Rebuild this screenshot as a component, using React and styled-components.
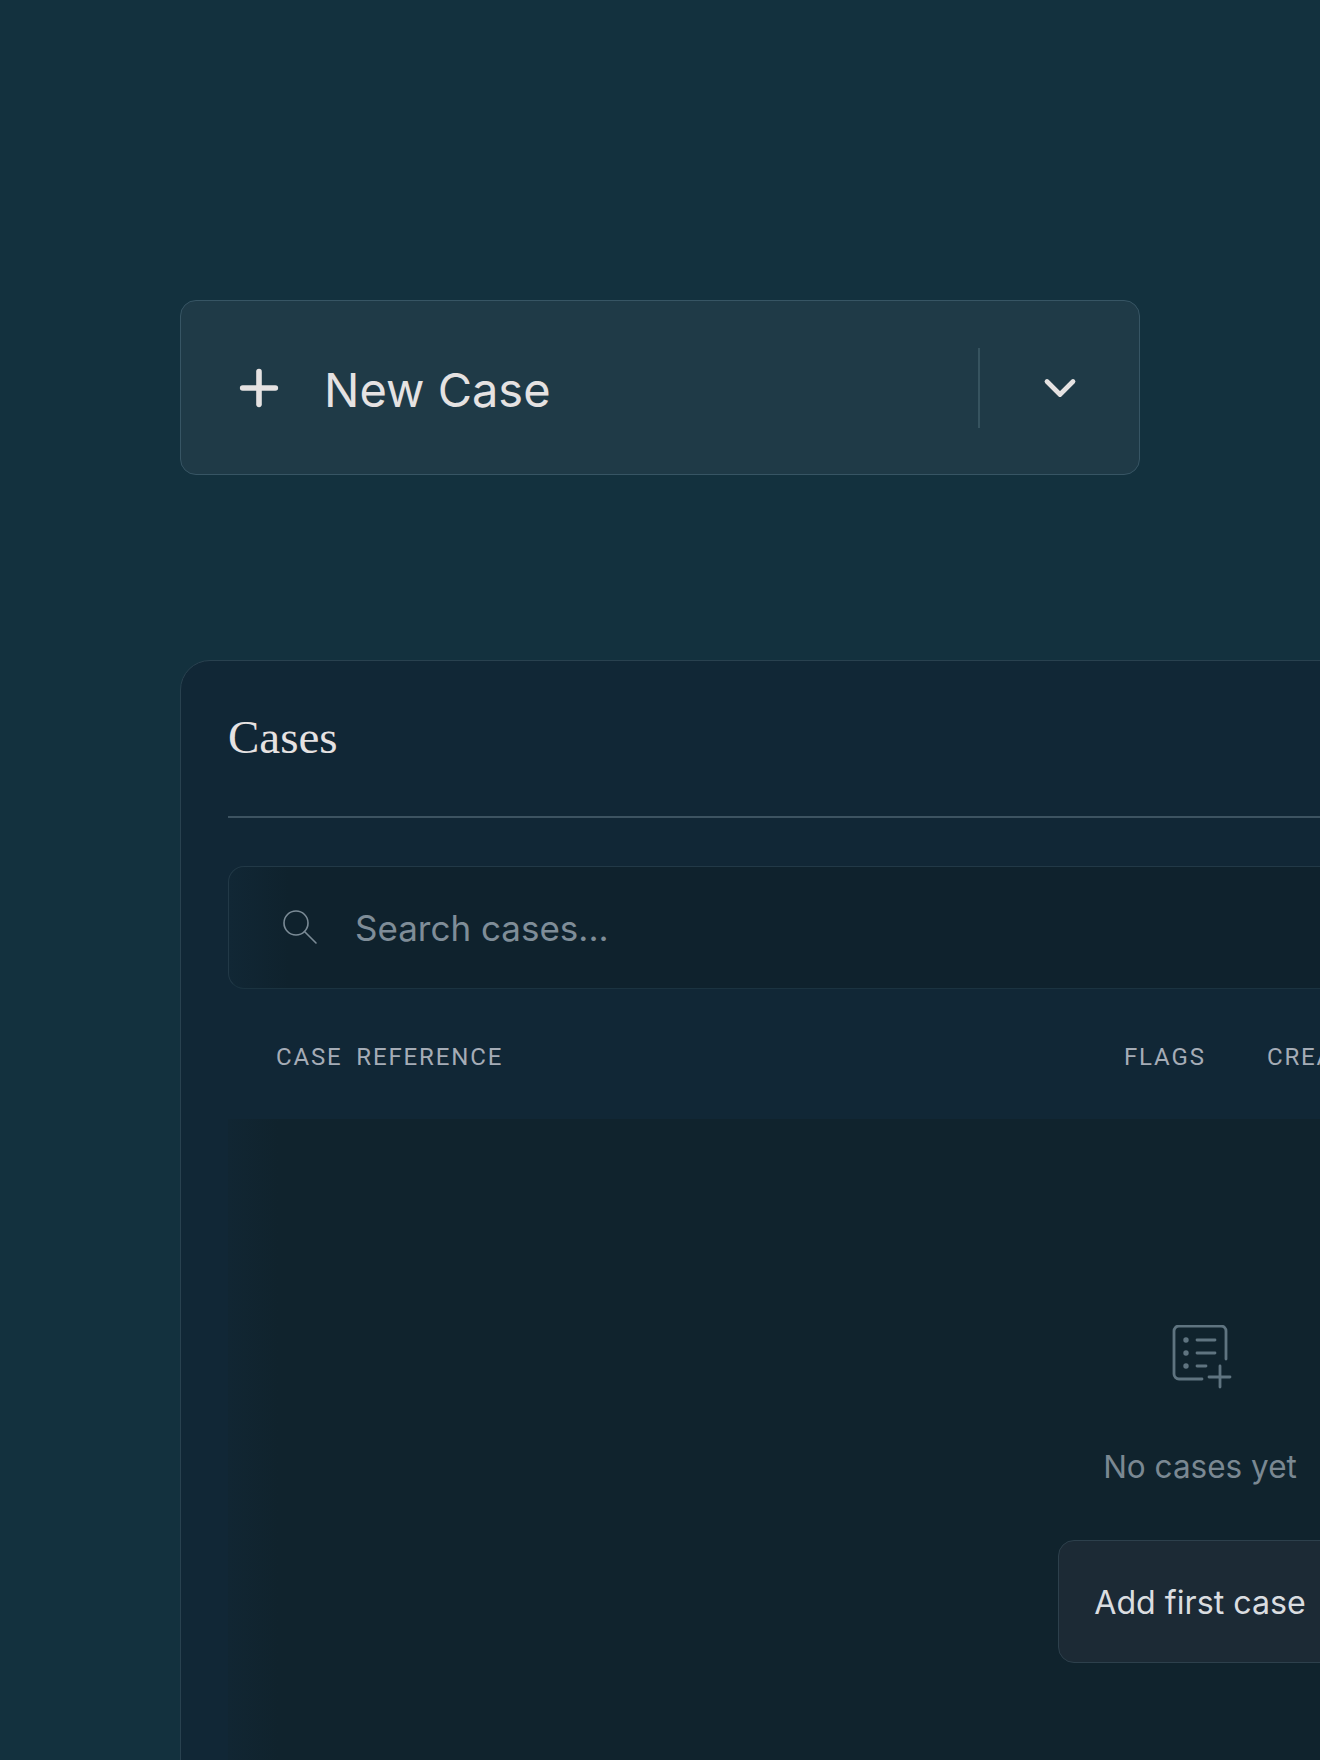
import React from 'react';
import styled, { createGlobalStyle } from 'styled-components';
import { ChevronDown, Plus } from 'lucide-react';

const GlobalStyle = createGlobalStyle`
  html, body {
    margin: 0;
    height: 1760px;
    overflow: hidden;
    background: #13313e;
  }
`;

const Page = styled.div`
  width: 2400px;
  height: 1760px;
  box-sizing: border-box;
  padding: 300px 180px 0;
  font-family: Inter, "Noto Sans", sans-serif;
  background: #13313e;
`;

const NewCaseButton = styled.button`
  display: flex;
  align-items: center;
  width: 960px;
  height: 175px;
  box-sizing: border-box;
  padding: 0 0 0 50px;
  background: #1f3a47;
  border: 1.5px solid #375564;
  border-radius: 16px;
  color: #e5e2e2;
  font-family: inherit;
  cursor: pointer;
`;

const ButtonLabel = styled.span`
  flex: 1;
  margin-left: 37px;
  padding-top: 3px;
  font-size: 47px;
  line-height: 1;
  text-align: left;
`;

const ChevronArea = styled.span`
  display: flex;
  align-items: center;
  justify-content: center;
  width: 159px;
  height: 80px;
  border-left: 2px solid #36535f;
`;

const Panel = styled.section`
  width: 2040px;
  height: 1400px;
  box-sizing: border-box;
  margin-top: 185px;
  padding: 0 47px;
  background: #112736;
  border: 1.5px solid #29414f;
  border-radius: 30px;
`;

const PanelHeader = styled.header`
  display: flex;
  align-items: center;
  height: 157px;
  padding-bottom: 3px;
  box-sizing: border-box;
  border-bottom: 2px solid #3d5361;
`;

const Title = styled.h2`
  margin: 0;
  font-family: "Liberation Serif", serif;
  font-size: 47px;
  font-weight: 400;
  color: #e6e2e2;
`;

const SearchBar = styled.div`
  display: flex;
  align-items: center;
  height: 123px;
  box-sizing: border-box;
  margin-top: 48px;
  padding-left: 54px;
  background: linear-gradient(90deg, #112735 0, #0f222d 60px);
  border: 1.5px solid #223947;
  border-bottom-color: #1b3340;
  border-radius: 16px;
`;

const SearchInput = styled.input`
  flex: 1;
  margin-left: 34px;
  background: transparent;
  border: 0;
  outline: 0;
  font-family: inherit;
  font-size: 35px;
  color: #e5e2e2;

  &::placeholder {
    color: #7f8d98;
    opacity: 1;
  }
`;

const TableHead = styled.div`
  display: grid;
  grid-template-columns: 848px 143px 1fr;
  align-items: center;
  height: 130px;
  padding-top: 5px;
  box-sizing: border-box;
  padding-left: 48px;
`;

const HeadCell = styled.span`
  font-family: Roboto, "Liberation Sans", sans-serif;
  font-size: 24px;
  letter-spacing: 1.85px;
  word-spacing: 6px;
  color: #a5acb6;
`;

const TableBody = styled.div`
  display: flex;
  flex-direction: column;
  align-items: center;
  height: 800px;
  padding-top: 206px;
  background: linear-gradient(90deg, #112633 0, #10232d 50px);
`;

const EmptyIcon = styled.svg`
  display: block;
  color: #5f7480;
`;

const EmptyText = styled.p`
  margin: 58px 0 0;
  font-size: 31.5px;
  line-height: 40px;
  color: #7a8892;
`;

const AddButton = styled.button`
  width: 284px;
  height: 123px;
  box-sizing: border-box;
  margin-top: 53px;
  padding: 2px 0 0;
  background: #1c2a35;
  border: 1.5px solid #2d404c;
  border-radius: 16px;
  font-family: inherit;
  font-size: 32.2px;
  white-space: nowrap;
  color: #dadde0;
  cursor: pointer;
`;

function SearchIcon() {
  return (
    <svg width="36" height="36" viewBox="0 0 36 36" fill="none" stroke="#7b8b96" strokeWidth="1.6" strokeLinecap="round">
      <circle cx="13" cy="13" r="12" />
      <path d="M21.5 21.5 L33 33" />
    </svg>
  );
}

function CaseListIcon() {
  return (
    <EmptyIcon width="64" height="64" viewBox="0 0 64 64" fill="none" stroke="currentColor" strokeWidth="2.8" strokeLinecap="round">
      <path d="M34 54 H11 a5 5 0 0 1 -5 -5 V6 a5 5 0 0 1 5 -5 H53 a5 5 0 0 1 5 5 V34" />
      <circle cx="18" cy="15" r="1.3" fill="currentColor" />
      <circle cx="18" cy="28" r="1.3" fill="currentColor" />
      <circle cx="18" cy="41" r="1.3" fill="currentColor" />
      <path d="M29 15 H47 M29 28 H47 M29 41 H38" />
      <path d="M41 52 H62 M52 41 V62" />
    </EmptyIcon>
  );
}

function App() {
  return (
    <Page>
      <GlobalStyle />
      <NewCaseButton>
        <Plus size={56} strokeWidth={2.4} />
        <ButtonLabel>New Case</ButtonLabel>
        <ChevronArea>
          <ChevronDown size={52} strokeWidth={2.2} />
        </ChevronArea>
      </NewCaseButton>

      <Panel>
        <PanelHeader>
          <Title>Cases</Title>
        </PanelHeader>

        <SearchBar>
          <SearchIcon />
          <SearchInput placeholder="Search cases..." />
        </SearchBar>

        <TableHead>
          <HeadCell>CASE REFERENCE</HeadCell>
          <HeadCell>FLAGS</HeadCell>
          <HeadCell>CREATED</HeadCell>
        </TableHead>

        <TableBody>
          <CaseListIcon />
          <EmptyText>No cases yet</EmptyText>
          <AddButton>Add first case</AddButton>
        </TableBody>
      </Panel>
    </Page>
  );
}

export default App;
